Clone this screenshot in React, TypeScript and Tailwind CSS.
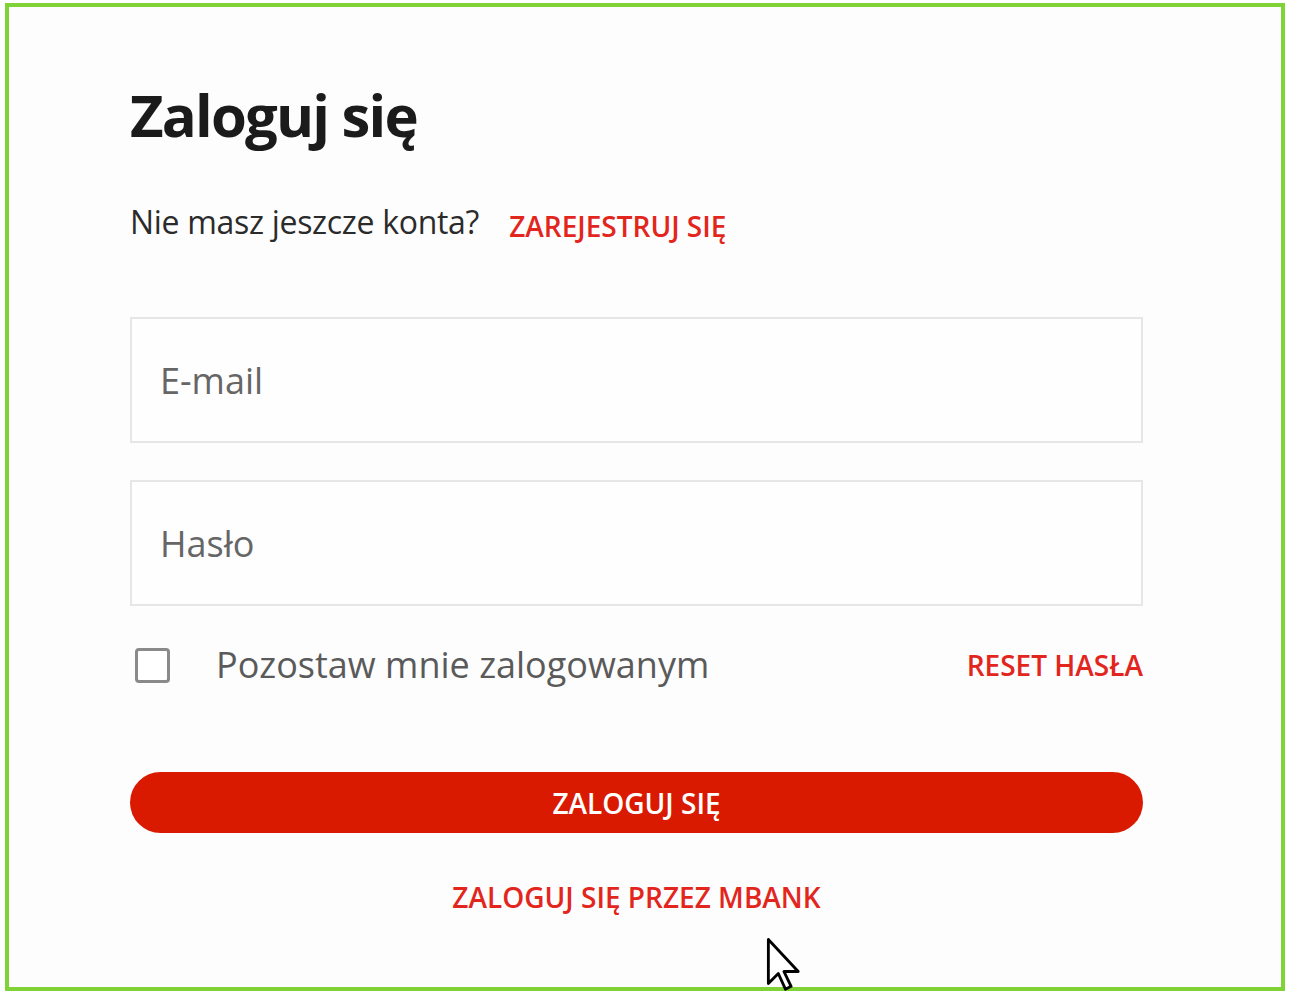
import React from "react";

const font = { fontFamily: '"Open Sans", "Liberation Sans", sans-serif' };

const Cursor = () => (
  <svg width="36" height="54" viewBox="0 0 12 19" className="absolute left-[766px] top-[938px]">
    <path
      d="M0.5 0.5 L0.5 16 L4 12.5 L6.5 18 L8.5 17 L6 11.8 L11 11.8 Z"
      fill="#fff"
      stroke="#000"
      strokeWidth="1"
      strokeLinejoin="round"
    />
  </svg>
);

export default function App() {
  return (
    <div className="relative w-[1299px] h-[993px] bg-white" style={font}>
      <div className="absolute left-[5px] top-[3px] w-[1280px] h-[988px] border-[4px] border-[#7fd336] bg-[#fdfdfd]">
        <div className="flex flex-col w-[1013px] ml-[121px] pt-[72px]">
          <h1 className="text-[58px] leading-[72px] font-bold text-[#1b1b1b] tracking-[-1.8px]">
            Zaloguj się
          </h1>
          <div className="flex items-baseline mt-[49px] gap-[30px]">
            <span className="text-[32px] leading-[44px] text-[#2b2b2b] tracking-[-0.3px]">Nie masz jeszcze konta?</span>
            <a className="text-[28px] font-semibold text-[#e3261d] translate-y-[3px]">ZAREJESTRUJ SIĘ</a>
          </div>
          <div className="flex flex-col gap-[37px] mt-[73px]">
            <input
              placeholder="E-mail"
              className="h-[126px] border-2 border-[#e6e6e6] bg-[#fefefe] px-[28px] text-[36px] placeholder:text-[#666] outline-none"
            />
            <input
              placeholder="Hasło"
              className="h-[126px] border-2 border-[#e6e6e6] bg-[#fefefe] px-[28px] text-[36px] placeholder:text-[#666] outline-none"
            />
          </div>
          <div className="flex items-center justify-between mt-[34px]">
            <label className="flex items-center gap-[46px]">
              <span className="ml-[5px] w-[35px] h-[35px] rounded-[4px] border-[3px] border-[#8a8a8a] bg-white" />
              <span className="text-[36px] leading-[50px] text-[#5a5a5a]">Pozostaw mnie zalogowanym</span>
            </label>
            <a className="text-[28px] font-semibold text-[#e3261d]">RESET HASŁA</a>
          </div>
          <button className="mt-[82px] h-[61px] rounded-full bg-[#da1a00] text-white text-[28px] font-semibold">
            ZALOGUJ SIĘ
          </button>
          <a className="mt-[44px] text-center text-[28px] leading-[40px] font-semibold text-[#e3261d]">
            ZALOGUJ SIĘ PRZEZ MBANK
          </a>
        </div>
      </div>
      <Cursor />
    </div>
  );
}
